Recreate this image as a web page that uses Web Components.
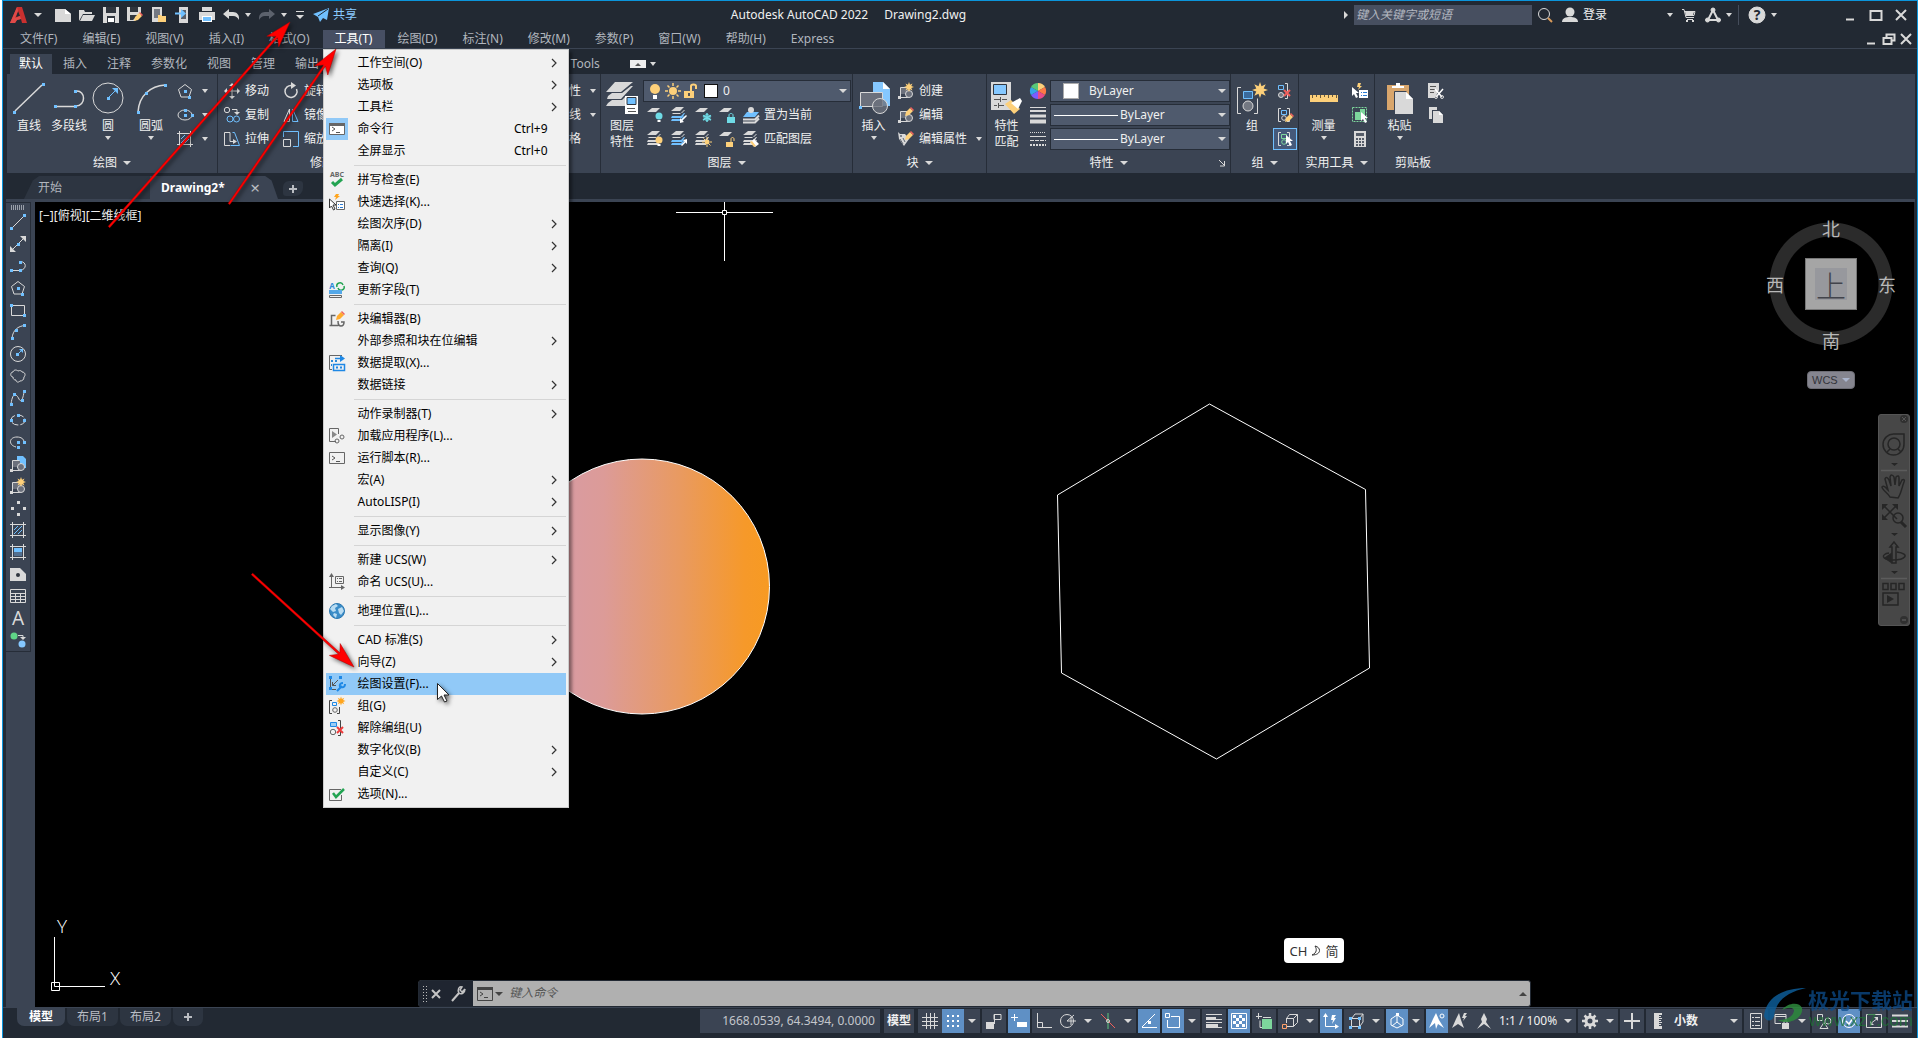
<!DOCTYPE html>
<html lang="zh-CN">
<head>
<meta charset="utf-8">
<title>Autodesk AutoCAD 2022 Drawing2.dwg</title>
<style>
html,body{margin:0;height:100%;background:#fff;overflow:hidden}
body{font:12px/16px "Noto Sans","Noto Sans CJK SC",sans-serif;color:#f0f0f0}
</style>
</head>
<body>
<cad-app>
  <cad-titlebar slot="top"></cad-titlebar>
  <cad-menubar slot="top"></cad-menubar>
  <cad-ribbon-tabs slot="top"></cad-ribbon-tabs>
  <cad-ribbon slot="top"></cad-ribbon>
  <cad-doc-tabs slot="top"></cad-doc-tabs>
  <cad-toolbar slot="left"></cad-toolbar>
  <cad-canvas slot="main"></cad-canvas>
  <cad-footer slot="bottom"></cad-footer>
  <cad-arrows slot="over"></cad-arrows>
</cad-app>

<script>
const L='#d9d9d9', B='#70c0ff', Y='#fdd07a', R='#f0605c', G='#7dd69c', T='#6fdbe6', K='#5f6570';
const sq=(x,y,c=B,s=3)=>`<path d="M${x-1} ${y-1}h${s}v${s}h-${s}z" fill="${c}" stroke="none"/>`;
const f=(d,c=L)=>`<path d="${d}" fill="${c}" stroke="none"/>`;
const p=(d,c=L,w=1)=>`<path d="${d}" stroke="${c}" stroke-width="${w}"/>`;
const ci=(x,y,r,c='none',s=L)=>`<circle cx="${x}" cy="${y}" r="${r}" fill="${c}" stroke="${s}"/>`;
const sheet=(y,c=L,x=0)=>f(`M${x+5} ${y}h8l-4 4h-9z`,c);
const sheets=(c2=L)=>sheet(0)+f('M2 6h9l3-3h-1l-3 3-1 1H1z')+f('M1 9h9l3-3h1l-3 5H0z',c2)+f('M1 12h9l3-3h1l-3 5H0z',c2);
const spark=(x,y,r,c=Y)=>{let d='';for(let i=0;i<16;i++){const a=i*Math.PI/8,q=i%2?r*.5:r;d+=(i?'L':'M')+(x+Math.sin(a)*q).toFixed(1)+' '+(y-Math.cos(a)*q).toFixed(1)}return f(d+'z',c)};
const pencil=(x,y,dark)=>f(`M${x} ${y+8}l1-4 4-4 3 3-4 4z`,dark?'#ffab2e':Y)+f(`M${x+5} ${y}l1-1 3 3-1 1z`,R);
const bulb=(x,y,c)=>ci(x,y,3.5,c,'none')+f(`M${x-1.5} ${y+4}h3v2h-3z`,'#fff');
const blk=(fill='#6b707c',s=L)=>p('M.5 14.5h10M2.5 14V4.5h7',s)+f('M3 5h7v6H3z',fill)+ci(11,11,3.5,fill,s)+sq(1,14,s);
const cur=(x,y)=>`<path d="M${x} ${y}v9l2-2 2 4 2-1-2-4h3z" fill="#fff" stroke="none"/>`;
const brk=(c,b,g)=>p('M4 1.500H1.500v13H4M10 14.500h2.500v-13H10',c)+`<path d="M4.500 3.500h5v4h-5z" fill="none" stroke="${b}"/>`+ci(7,11,2.300,'none',g);
const pent=p('M8 1.500L14.500 6.500 12 14H4L1.500 6.500z')+sq(8,8)+sq(12,14);
const hatchFrame=p('M0 2.500h16M0 13.500h16M2.500 0v16M13.500 0v16');
const I={
logo:[18,f('M7 1h5l5 16h-5l-1-4-4 1-2 3H0z','#c9302f')+f('M8 5l-2 6 4-1z','#222933')+f('M0 17L7 1l1 4-3 7 5-2 1 3-4 1-2 3z','#e04a48')],
new:[16,f('M0 2h10l6 5v8H0z')+f('M10 2v5h6z','#fff')],
open:[16,f('M0 14V3h5l1 2h7v2H4z')+f('M4 8h12l-3 6H1z')],
save:[16,f('M0 0h16v16H0z')+f('M3 0h10v6H3zM4 9h8v7H4z','#30363f')+f('M5 11h6v4H5z','#fff')],
saveas:[16,f('M0 0h14v8l-6 6H0z')+f('M3 0h8v5H3zM3 8h8l-5 5H3z','#30363f')+pencil(7,6)],
webopen:[16,f('M1 0h10v15H1z')+f('M3 2h6v9H3z','#737882')+f('M7 8h3l1 1h4v6H7z',Y)],
websave:[16,f('M4 0h9v16H4z')+f('M6 3h5v9H6z','#59606b')+p('M0 6.500h7',B,2)+f('M6 2l5 4.500L6 11z',B)],
print:[16,f('M3 0h10v4H3zM0 5h16v8H0z')+f('M3 9h10v6H3z','#fff')+f('M4 10h8v4H4z',B)],
undo:[16,f('M0 7l6-5v3h4c4 0 6 3 6 6v2c-1-2-3-4-6-4H6v3z')],
redo:[16,f('M16 7l-6-5v3H6c-4 0-6 3-6 6v2c1-2 3-4 6-4h4v3z','#5c626d')],
custom:[10,p('M1 1.500h8')+f('M1 5h8L5 9z')],
plane:[16,f('M0 7L16 1l-2 12-4-2-3 4-2-5z',B)+p('M15 2L5 9','#222933')],
down:[8,f('M0 2h8L4 6z')],
downs:[6,f('M0 1h6L3 5z')],
right:[8,f('M2 0v8l4-4z')],
search:[16,ci(7,7,5.500)+p('M11 11l4 4','#d99b5b',2)],
user:[16,ci(8,5,4.500,L,'none')+f('M0 15c0-4 4-5 8-5s8 1 8 5z')],
cart:[14,p('M0 1.500h2l2 8h8M3 3.500h10l-1 4H4M5 11.500h6',L)+f('M3 4h9l-1 3H4zM4 12h2v2H4zM10 12h2v2h-2z')],
adsk:[16,p('M3 13L8 3l5 10z',L,2)+ci(8,3,2,L)+ci(2.500,13,2,L)+ci(13.500,13,2,L)],
help:[18,ci(9,9,8,L)+'<text x="9" y="14" text-anchor="middle" font-size="14" font-weight="bold" fill="#222933" stroke="none">?</text>'],
min:[14,p('M3 11.500h8',L,2)],
max:[14,p('M1.500 3h11v9h-11z',L,2)],
close:[12,p('M1 1l10 10M11 1L1 11',L,2)],
restore:[14,p('M4.500 5V2.500h8v6H10',L,2)+p('M1.500 6h8v6h-8z',L,2)],
line32:[32,p('M2 29L29 3',L,1.500)+sq(1,30)+sq(30,2)],
pline32:[32,p('M3 24.500h20M23 9c10-1 10 15 0 15',L,1.500)+sq(2,24)+sq(22,24)+sq(22,9)],
circle32:[32,ci(16,16,15)+p('M16 16l8-8',B)+f('M26 6v6l-6-6z',B)+sq(16,16)],
arc32:[32,p('M3 30C4 13 16 4 30 3',L,1.500)+sq(3,30)+sq(11,11)+sq(30,3)],
pent:[16,pent],
ellipse:[16,'<ellipse cx="8" cy="8" rx="7" ry="5"/>'+sq(8,8)+sq(15,8)+sq(8,3)],
hatch:[16,hatchFrame+p('M4 8l4-4M4 12l8-8M8 12l4-4',B)],
move:[16,p('M8 1v14M1 8h14')+f('M8 0l3 3H5zM8 16l3-3H5zM0 8l3-3v6zM16 8l-3-3v6z')],
rotate:[16,p('M9 2.500A6 6 0 1 0 13.500 6',L,1.500)+f('M8-1l5 3.500L8 6z')],
copy:[16,ci(3,3,2.700)+p('M8 2.500h5v4')+f('M10 5h6l-3 3z')+ci(6,12,3,'none',B)+ci(12.500,12,3,'none',B)],
mirror:[16,p('M6.500 2v12.500H1z')+p('M9.500 2v12.500H15z',B)],
stretch:[16,p('M6 14.500H.500V1.500H6v9M6 10.500h4')+f('M9 8l4 2.500L9 13z')+p('M8.500 1.500h2l5 13h-9',B)],
scale:[16,p('M.500 8.500h7v7h-7z')+p('M.500 6V.500h15v15H10',B)],
layers32:[32,f('M9 0h18L15 10H0zM2 14l4-3h10l9-7h2L15 17H1zM2 21l4-3h10l3-3 1 9H0z')+f('M19 14h13v18H19z','#fff')+`<path d="M21 15.500h9v7h-9z" fill="${B}" stroke="#30363f"/>`+p('M21 26.500h8M22 29.500h8','#555')],
bulbY:[16,ci(8,6,5,Y,'none')+f('M6 12h4v4H6z','#fff')],
sun:[16,ci(8,8,4,Y,'none')+p('M8 0v3M8 13v3M0 8h3M13 8h3M2.500 2.500l2 2M11.500 11.500l2 2M2.500 13.500l2-2M11.500 4.500l2-2',Y,1.500)],
lock:[16,f('M1 8h10v7H1z',Y)+p('M8 8V3c0-2 5-2 5 0v3',Y,2)+f('M5 10h2v3H5z','#555')],
ly1:[16,sheet(1)+bulb(12,9,T)],
ly2:[16,sheets(B)+f('M9 16v-5l1.500 1.500L15 8l1 1-4.500 4.500L13 15z','#fff')],
ly3:[16,sheet(1)+p('M12 6v9M8 8.500l8 4.500M16 8.500L8 13',T,1.500)+ci(12,10.500,3,'none',T)],
ly4:[16,sheet(1)+f('M8 10h8v6H8z',T)+p('M10 10V8c0-2 4-2 4 0v2',T)],
ly5:[16,f('M4 5h12l-4 5H0z',B)+p('M0 12.500h12l4-4M0 15.500h12l4-4',L,2)+ci(8,3,3,L,'none')],
ly6:[16,sheets()+bulb(12,9,Y)],
ly7:[16,sheets(B)+f('M16 8v5l-1.500-1.500L11 15l-1-1 3.500-3.500L12 9z','#fff')],
ly8:[16,sheets()+ci(12,11,2.500,Y,'none')+p('M12 6v2M12 14v2M7 11h2M15 11h2M8.500 7.500l1.500 1.500M15.500 14.500L14 13',Y)],
ly9:[16,sheet(1)+f('M7 11h7v5H7z',Y)+p('M12 11V8c0-2 3-2 3 0v2',Y)],
ly10:[16,sheets()+f('M7 12l4-4 5 5-4 3z','#fff')+f('M7 11l2-1 4 5-2 1z',Y)],
insert32:[32,f('M15 0h10l7 7v17H15z','#85c8ff')+f('M25 0v7h7z','#fff')+`<path d="M2.500 10.500h22v14h-22z" fill="#6b707c" stroke="${L}"/>`+ci(22,24,7.500,'#6b707ccc')+sq(2,25)],
create:[16,blk()+spark(11,4,5)],
edit:[16,blk()+pencil(7,1)],
attr:[16,f('M0 1l2 2h5l4 5-5 7-5-7z')+ci(3,5,1,K,'none')+p('M2 8l3 5M5 7l2 4',K)+pencil(7,1)],
props32:[32,f('M0 0h20v28H0z')+`<path d="M2.500 2.500h13v10h-13z" fill="#85c8ff" stroke="#30363f"/>`+p('M3 17.500h6M11 17.500h5M3 23.500h3M8 23.500h5M9.500 15v5M7.500 21v5','#555')+f('M14 22l6-4 9 9-6 5z',Y)+f('M20 21l9-5 2 3-4 8z','#fff')],
wheel:[16,f('M8 8V0a8 8 0 0 1 7 4z',Y)+f('M8 8l7-4a8 8 0 0 1 0 8z','#ff7a45')+f('M8 8l7 4a8 8 0 0 1-7 4z','#e84b8a')+f('M8 8v8a8 8 0 0 1-7-4z','#7a5cff')+f('M8 8l-7 4a8 8 0 0 1 0-8z','#35a5e8')+f('M8 8L1 4a8 8 0 0 1 7-4z','#58c878')],
lws:[16,p('M0 .500h16')+p('M0 4h16',L,2)+p('M0 9h16',L,3)+p('M0 14.500h16',L,4)],
lts:[16,'<g stroke-dasharray="1 1">'+p('M0 1.500h16')+'</g>'+p('M0 5.500h16')+'<g stroke-dasharray="4 1">'+p('M0 9.500h16')+'</g><g stroke-dasharray="2 1">'+p('M0 13.500h16M0 14.500h16')+'</g>'],
group32:[32,p('M5 5.500H1.500v26H5M18 31.500h3.500v-15',L)+`<path d="M7.500 9.500h9v7h-9z" fill="#3a6a9c" stroke="${B}"/>`+ci(12,24,5,'#737882')+spark(24,8,8)],
ungroup:[16,`<path d="M1.500 2.500h5v4h-5z" stroke="${B}"/>`+ci(4,12,2.500,'#737882')+p('M8 .500h2.500v15H8')+p('M7 7l6 6M13 7l-6 6',R,2)],
gedit:[16,brk(L,B,L)+pencil(8,7)],
gsel:[16,brk(L,G,G)+cur(9,4)],
ruler32:[32,f('M2 13h28v7H2z',Y)+p('M4.500 13v3M8.500 13v2M12.500 13v3M16.500 13v2M20.500 13v3M24.500 13v2M28.500 13v3','#6a5a3a')],
qsel:[16,cur(0,4)+f('M7 7h9v8H7z','#fff')+p('M9 9.500h1M11 9.500h4M9 12.500h1M11 12.500h4','#2b7cd3')+f('M6 0h3L8 3h2L6 7l1-3H5z',Y)],
selall:[16,`<path d="M.500 .500h14v14h-14z" stroke="${G}" stroke-dasharray="2 1"/>`+f('M3 5h5V2h5v7H9v4H3z',G)+cur(9,5)],
calc:[16,f('M2 0h12v16H2z')+f('M4 2h8v3H4zM4 7h2v2H4zM7 7h2v2H7zM10 7h2v2h-2zM4 10h2v2H4zM7 10h2v2H7zM10 10h2v2h-2zM4 13h2v2H4zM7 13h2v2H7zM10 13h2v2h-2z','#555c68')],
paste32:[32,f('M3 3h22v25H3z','#d9a66c')+f('M8 4h4V1h4v3h4v2H8z','#fff')+f('M11 10h11l7 7v15H11z')+f('M22 10v7h7z','#fff')+p('M10.500 32V9.500h12','#3b4453')],
cut:[16,f('M0 0h11v7l-4 8H0z')+p('M2 3.500h6M2 6.500h5M2 9.500h4','#555')+p('M7 6l7 8M15 6l-7 8','#fff',1.500)+ci(8,14,1.500)+ci(14,14,1.500)],
copyc:[16,f('M1 0h8v3H4v9H1z')+f('M5 4h6l4 4v8H5z')+f('M11 4v4h4z','#fff')],
launcher:[8,p('M1 1l5 5M6.500 2v5H2')],
plus:[10,p('M5 1v8M1 5h8','#b9bcc1',2)],
tline:[16,p('M1 15L15 1')+sq(1,14)+sq(14,1)],
txline:[16,p('M2 14L14 2')+f('M0 16v-6l6 6zM16 0v6l-6-6z')+sq(8,8)],
tpline:[16,p('M1 12.500h9M10 3.500c7 0 7 8 0 9')+sq(1,12)+sq(10,12)+sq(10,4)],
trect:[16,p('M1.500 3.500h13v10h-13z')+sq(1,3)+sq(14,13)],
tarc:[16,p('M2 14C3 6 8 2 15 1.500')+sq(2,14)+sq(6,6)+sq(14,1)],
tcircle:[16,ci(8,8,7.500)+p('M8 8l4-4',B)+f('M13 3v4L9 3z',B)+sq(7,8)],
cloud:[16,p('M3 9c-3 0-3-5 0-5 1-3 4-2 5-1 2-1 4 0 4 1 3 0 4 3 2 5 0 3-2 4-4 4-2 2-4 1-4-1-2 0-3-1-3-3z')],
spline:[16,p('M1 14C3 0 7 5 9 9s4 0 5-7')+sq(1,14)+sq(4,4)+sq(12,10)+sq(14,1)],
tell:[16,'<ellipse cx="8" cy="8" rx="7" ry="5" stroke-dasharray="7 2"/>'+sq(1,8)+sq(14,8)+sq(8,3)],
tearc:[16,p('M6 13C-2 11-1 3 7 3c4 0 7 2 7 5')+sq(8,8)+sq(14,8)+sq(8,13)],
tins:[16,f('M7 0h6l3 3v9H7z',B)+blk()],
points:[16,sq(8,2,L)+sq(2,8,L)+sq(14,8,L)+sq(8,14,L)],
grad:[16,hatchFrame+f('M4 4h8v4H4z',B)+f('M4 8h8v4H4z','#547090')],
region:[16,f('M0 2h10l6 6v7H0z')+ci(8,9,2,'#30363f','none')],
table:[16,p('M.500 1.500h15v13H.500zM0 5.500h16M0 8.500h16M0 11.500h16M5.500 5v10M10.500 5v10')],
mtext:[16,'<text x="8" y="15" text-anchor="middle" font-size="19" font-family="Noto Sans" fill="#d9d9d9" stroke="none">A</text>'],
addsel:[16,ci(4,4,3.500,'#5fd587','none')+ci(12,12,3.500,'#85c8ff','none')+p('M8 3.500h5v3')+f('M10 5h6l-3 3z')],
/* drop-down menu icons */
mcmd:[16,`<path d="M.500 2.500h15v11H.500z" fill="#fff" stroke="#666"/>`+f('M0 2h16v3H0z','#666')+p('M3 6l3 2-3 2M7 11.500h4','#555')],
mspell:[16,'<text x="8" y="5" text-anchor="middle" font-size="7" font-weight="bold" fill="#666" stroke="none">ABC</text>'+p('M3 10l3 3 7-6','#23a452',3)],
mqsel:[16,'<path d="M.500 5v9l2-2 2 4 1.500-1-2-4h3z" fill="#fff" stroke="#333"/>'+'<path d="M7.500 7.500h8v8h-8z" fill="#fff" stroke="#666"/>'+p('M9 10.500h1M11 10.500h3M9 13.500h1M11 13.500h3','#2b7cd3')+f('M7 0h3L9 2h2L6 6l1-3H5z','#ffa51e')],
mfield:[16,'<text x="3" y="7" text-anchor="middle" font-size="8" font-weight="bold" fill="#2b8ad8" stroke="none">A</text>'+p('M8 5a3 3 0 0 1 6-2M15 4a3 3 0 0 1-6 2','#23a452',1.500)+f('M0 8h13v4H0z','#55a8e8')+p('M.500 13.500h12v2H.500z','#666')],
mblk:[16,p('M.500 14.500h9M2.500 14V4.500h4M9 10c0 7 6 6 6 1l-3 0','#666',1.500)+pencil(7,1,1)],
mdata:[16,p('M13 .500H.500v14H3','#666')+p('M2 6h2M6 6h2M2 10h1','#2b8ad8',2)+p('M6 3.500h8M4.500 9.500h11v6h-11z','#1e88e5',1.500)+p('M7 12.500h2M11 12.500h2','#1e88e5',2)+f('M11 0l5 3.500L11 7z','#1e88e5')],
mapp:[16,p('M7 13.500H.500v-13h9V6','#666')+f('M3 3l5 3.500L3 10z','#888')+ci(8,13,2,'none','#666')+ci(13,9,2,'none','#666')],
mscr:[16,p('M.500 2.500h15v11H.500z','#666')+p('M3 6l3 2-3 2M7 11.500h4','#555')],
mucs:[16,p('M2.500 2v11.500H14M0 13.500h3M6.500 2.500h8v7h-8zM8 4.500h1M10 4.500h3M8 7.500h1M10 7.500h3','#666')+f('M2.500-1l2.500 4H0zM16 13.500l-4-2.500v5z','#666')],
globe:[16,ci(8,8,7.500,'#3a8cc8','#2b78b0')+f('M3 3l4-2 2 2-3 2 1 3-3 1-3-3zM9 6l4-2 2 4-3 4-2-2zM5 10l3 1-1 4-3-3z','#b9dcf2')],
mdraft:[16,p('M1.500 3v9M3.500 9.500L9 4M3.500 6v3.500H7M3 13.500h4','#555')+sq(1,1,'#1e88e5')+sq(11,1,'#1e88e5')+sq(1,12,'#1e88e5')+p('M8 15l5-5M11 11c-1-3 1-4 3-4M12 11c3 1 4-1 4-3','#1e88e5',2)],
mgroup:[16,p('M3 2.500H.500v13H3M8 15.500h2.500V9','#444',1)+p('M3.500 4.500h4v3h-4z','#1e88e5')+ci(6,12,2.300,'none','#666')+spark(12,3,4.500,'#ffa51e')],
mungroup:[16,'<path d="M1.500 2.500h6v4h-6z" fill="#9ccdf5" stroke="#1e88e5"/>'+ci(4,12,2.700,'none','#666')+p('M9 .500h2.500v15H9','#444')+p('M8 7l6 6M14 7l-6 6','#ee3b3b',2)],
moptions:[16,p('M12 3.500H.500v11h12V9','#666')+p('M4 7l3 4 8-8','#23a452',2.500)],
chev:[8,p('M2 0l4 4-4 4','#333',1.200)],
/* status bar icons */
sgrid:[16,p('M0 4.500h16M0 8.500h16M0 12.500h16M4.500 0v16M8.500 0v16M12.500 0v16')],
ssnap:[16,[1,6,11].map(a=>[2,7,12].map(b=>f(`M${a+1} ${b}h2v2h-2z`,'#fff')).join('')).join('')],
sinf:[16,p('M8 1.500h7v5H8z')+f('M0 9h8v7H0z')+p('M8.500 2v9')],
sdyn:[16,p('M3.500 1v7M0 4.500h7','#fff')+f('M6 9h10v5H6z','#fff')],
sortho:[16,p('M1.500 0v14.500H16M1.500 9.500h5v5')],
spolar:[16,ci(7,8,6.500)+p('M7 8l7-6M7 8h9M11 12V4')],
siso:[16,p('M1 1l14 14',R)+p('M8 0v16','#5fc87f')+ci(8,8,1.500)],
strack:[16,p('M1 14.500h15M1 14L14 1','#fff')+sq(8,9,'#fff')],
sosnap:[16,p('M6 3.500h8.500v11h-12V7','#fff')+p('M.500 .500h4v4h-4z','#fff')],
slw:[16,p('M0 1.500h16')+f('M0 4h10v3H0zM0 11h12v4H0z')+p('M0 9.500h16M8 6.500h8M9 14.500h7')],
strans:[16,p('M.500 .500h15v15H.500z','#fff')+[2,5,8,11].map((a,i)=>[2,5,8,11].map((b,j)=>(i+j)%2?'':f(`M${a} ${b}h3v3h-3z`,'#fff')).join('')).join('')],
scyc:[16,p('M2.500 0v6M0 3.500h6M4 7.500v7h3M7 4.500h8')+f('M6 6h10v10H6z',G)],
s3d:[16,p('M4.500 5.500h7v8H5M4.500 5.500l3-4h8v8l-4 4M11.500 5.500l4-4M4.500 5v5')+p('M.500 11.500h4v4h-4z','#ffa06a')],
sducs:[16,p('M2.500 2v11.500H15','#fff')+f('M2.500 0l2.500 4H0zM16 13.500l-4-2.500v5zM9 2h4l-2 3h2l-4 6 1-4H8z','#fff')],
sfilt:[16,p('M3.500 5.500h8v8h-8zM4 5l3-4h8v8l-3 4M12 5l3-4')+sq(2,5)+sq(11,5)+sq(2,14)+sq(11,14)],
sgiz:[16,p('M8 2L2 6v6l6 3 6-3V6zM8 2v7L3 13M8 9l5 4','#fff')+sq(8,1,'#fff')],
sann1:[16,f('M7 0L4 6 0 15l6-5 1 6 2-5 6 4-5-8z','#fff')+ci(13,3,2,'none','#fff')],
sann2:[16,f('M7 0L4 6 0 15l6-4 6 4-3-8z')+f('M12 0h3l-2 3h2l-4 5 1-3h-2z')],
sann3:[16,f('M8 0L5 6l1 3-5 7 7-5 7 5-5-7 1-3z')],
gear:[16,ci(8,8,4,'none',L).replace('/>',' stroke-width="3"/>')+p('M8 0v4M8 12v4M0 8h4M12 8h4M2.500 2.500l3 3M10.500 10.500l3 3M2.500 13.500l3-3M10.500 5.500l3-3',L,2.500)],
splus:[16,p('M8 0v16M0 8h16',L,2)],
sruler:[16,f('M4 0h8v2H9v1h2v1H9v1h3v1H9v1h2v1H9v1h3v1H9v1h2v1H9v1h3v3H4z')],
slist:[16,p('M2.500 .500h11v15h-11zM4 4.500h2M7 4.500h5M4 8.500h2M7 8.500h5M4 12.500h2M7 12.500h5')],
slock:[16,p('M12 7V1.500H1v9h6M1 3.500h11')+f('M8 10h7v6H8z')+p('M10 10V8h3v2')],
siso2:[16,p('M1.500 1.500h5v6h-5zM8 9.500l4 6H4z')+ci(12,8,3)],
sclean:[16,ci(8,8,6.500,'none','#fff')+p('M5 8l3 3 4-6','#fff',1.500)],
sfull:[16,p('M.500 1.500h15v13H.500zM4 11l8-6')+f('M12 4v4L8 4zM4 12V8l4 4z')],
sburger:[16,p('M0 2.500h16M0 8h16M0 13.500h16',L,2)],
wrench:[16,p('M2 15l7-8','#c4c4c4',2)+p('M15 3l-3 3-2-2 2-3C9 0 7 4 9 7c2 2 6 0 6-4','#c4c4c4',1.500)],
cmdx:[12,p('M2 2l8 8M10 2l-8 8','#c4c4c4',2)],
cmdbox:[16,`<path d="M.500 1.500h15v13H.500z" stroke="#444"/>`+f('M0 1h16v3H0z','#444')+p('M3 6l3 2-3 2M7 11.500h4','#444')]
};
class Icon extends HTMLElement{
  connectedCallback(){
    const [n,m]=I[this.getAttribute('name')];
    if(!this.shadowRoot)this.attachShadow({mode:'open'});
    this.shadowRoot.innerHTML=`<style>:host{display:inline-block;flex:none;width:${n}px;height:${n}px}svg{display:block;overflow:visible}</style><svg width="${n}" height="${n}" viewBox="0 0 ${n} ${n}" fill="none" stroke="${L}" aria-hidden="true">${m}</svg>`;
  }
}
customElements.define('cad-icon',Icon);
const ic=n=>`<cad-icon name="${n}"></cad-icon>`;
const BASE=':host,*{box-sizing:border-box}button,input,select{font:inherit;color:inherit;background:none;border:0;padding:0;margin:0;border-radius:0;outline:0}button{display:flex;align-items:center;white-space:nowrap}';
const define=(tag,css,html)=>customElements.define(tag,class extends HTMLElement{
  constructor(){super();const r=this.attachShadow({mode:'open'});
  r.innerHTML=`<style>${BASE}${css}</style>`+(typeof html==='function'?html(this):html);}
});

define('cad-app',`
:host{display:flex;flex-direction:column;height:100vh;margin:0 1px 0 2px;border:1px solid #0b95dc;border-bottom:0;background:#222933;position:relative}
.mid{flex:1;display:flex;min-height:0;padding:0 3px}
::slotted([slot=main]){flex:1}`,
`<slot name="top"></slot><div class="mid"><slot name="left"></slot><slot name="main"></slot></div><slot name="bottom"></slot><slot name="over"></slot>`);

define('cad-titlebar',`
:host{display:grid;grid-template-columns:38% 1fr auto;align-items:center;height:29px;padding:0 10px 2px 7px}
.l,.r{display:flex;align-items:center}.l{gap:8px}.r{justify-content:flex-end}
.pair{gap:6px}.logo{margin-right:5px;gap:6px}
.share{color:#8bcbff;gap:4px}
.t{display:flex;gap:16px}
input{width:178px;height:20px;background:#474f60;padding:0 2px;font-style:italic;color:#ddd;margin-left:4px}
input::placeholder{color:#b4b8c0;opacity:1}
.r button{margin-left:5px}.r .u{gap:5px;margin-left:9px}.r .m{margin-left:60px}
.sep{width:1px;height:20px;background:#454d5b;margin-left:6px}
.r .w{margin-left:12px}.r .w1{margin-left:66px}`,
`<div class="l"><button class="logo" aria-label="应用程序">${ic('logo')}${ic('down')}</button>
${['new','open','save','saveas','webopen','websave','print'].map(n=>`<button aria-label="${n}">${ic(n)}</button>`).join('')}
<button class="pair" aria-label="undo">${ic('undo')}${ic('downs')}</button><button class="pair" aria-label="redo">${ic('redo')}${ic('downs')}</button>
<button aria-label="custom">${ic('custom')}</button><button class="share">${ic('plane')}<span>共享</span></button></div>
<div class="t"><span>Autodesk AutoCAD 2022</span><span>Drawing2.dwg</span></div>
<div class="r">${ic('right')}<input placeholder="键入关键字或短语" aria-label="搜索"><button aria-label="搜索">${ic('search')}</button>
<button class="u">${ic('user')}<span>登录</span></button><button class="m" aria-label="登录菜单">${ic('downs')}</button>
<button class="u" aria-label="商店">${ic('cart')}</button><button class="u" aria-label="Autodesk">${ic('adsk')}${ic('downs')}</button><span class="sep"></span>
<button class="u" aria-label="帮助">${ic('help')}${ic('downs')}</button>
<button class="w1" aria-label="最小化">${ic('min')}</button><button class="w" aria-label="最大化">${ic('max')}</button><button class="w" aria-label="关闭">${ic('close')}</button></div>`);

define('cad-menu-item',`
:host{display:block}
button{width:100%;height:22px;color:#000;text-align:left}
.i{width:22px;height:22px;display:flex;align-items:center;justify-content:center;margin-right:10px}
.l{flex:1}.k{padding-right:18px}.c{width:16px;display:flex;align-items:center}
:host([checked]) .i{background:#91c9f7}
:host([active]) button{background:#91c9f7}`,
h=>`<button role="menuitem"><span class="i">${h.getAttribute('icon')?ic(h.getAttribute('icon')):''}</span><span class="l"><slot></slot></span>${h.getAttribute('key')?`<span class="k">${h.getAttribute('key')}</span>`:''}${h.hasAttribute('sub')?`<span class="c">${ic('chev')}</span>`:''}</button>`);

/* label, icon, shortcut or '>' for a submenu, state */
const MENU=[['工作空间(O)','','>'],['选项板','','>'],['工具栏','','>'],['命令行','mcmd','Ctrl+9','checked'],['全屏显示','','Ctrl+0'],0,
['拼写检查(E)','mspell'],['快速选择(K)...','mqsel'],['绘图次序(D)','','>'],['隔离(I)','','>'],['查询(Q)','','>'],['更新字段(T)','mfield'],0,
['块编辑器(B)','mblk'],['外部参照和块在位编辑','','>'],['数据提取(X)...','mdata'],['数据链接','','>'],0,
['动作录制器(T)','','>'],['加载应用程序(L)...','mapp'],['运行脚本(R)...','mscr'],['宏(A)','','>'],['AutoLISP(I)','','>'],0,
['显示图像(Y)','','>'],0,['新建 UCS(W)','','>'],['命名 UCS(U)...','mucs'],0,['地理位置(L)...','globe'],0,
['CAD 标准(S)','','>'],['向导(Z)','','>'],['绘图设置(F)...','mdraft','','active'],['组(G)','mgroup'],['解除编组(U)','mungroup'],['数字化仪(B)','','>'],['自定义(C)','','>'],['选项(N)...','moptions']];
define('cad-dropdown',`
:host{display:block;width:246px;background:#f1f1f1;border:1px solid #ccc;padding:2px;box-shadow:3px 3px 3px #0006}
hr{border:0;height:1px;background:#d5d5d5;margin:3px 0 3px 28px}`,
`<div role="menu">${MENU.map(m=>m?`<cad-menu-item ${m[1]?`icon="${m[1]}"`:''} ${m[2]==='>'?'sub':m[2]?`key="${m[2]}"`:''} ${m[3]||''}>${m[0]}</cad-menu-item>`:'<hr>').join('')}</div>`);

define('cad-menubar',`
:host{display:flex;height:19px;border-bottom:1px solid #3b4453;padding:0 5px;color:#b1b6be;justify-content:space-between}
nav,.w{display:flex}.w{gap:4px;align-items:center}
nav>div{position:relative;display:flex}
nav button{padding:0 13px 0 12px}
.on{background:#474f63;color:#fff}
cad-dropdown{position:absolute;left:0;top:19px;z-index:20}`,
`<nav>${['文件(F)','编辑(E)','视图(V)','插入(I)','格式(O)'].map(t=>`<button>${t}</button>`).join('')}<div><button class="on">工具(T)</button><cad-dropdown></cad-dropdown></div>${['绘图(D)','标注(N)','修改(M)','参数(P)','窗口(W)','帮助(H)','Express'].map(t=>`<button>${t}</button>`).join('')}</nav>
<div class="w"><button aria-label="最小化图形">${ic('min')}</button><button aria-label="还原图形">${ic('restore')}</button><button aria-label="关闭图形">${ic('close')}</button></div>`);

define('cad-ribbon-tabs',`
:host{display:flex;height:25px;padding:5px 0 0 6px;color:#b1b6be}
button{padding:0 10px;height:20px}
.on{background:#3b4453;color:#fff;padding:0 9px;margin:0 1px}
.more{width:185px}
.x{gap:4px;padding:0 0 0 20px}.x i{width:16px;height:8px;background:#eee;display:flex;align-items:center;justify-content:center}
.x i::before{content:"";border:3px solid transparent;border-top:0;border-bottom:3px solid #555}`,
`<button class="on">默认</button>${['插入','注释','参数化','视图','管理','输出'].map(t=>`<button>${t}</button>`).join('')}<span class="more"></span><button>Express Tools</button><button class="x" aria-label="最小化功能区"><i></i>${ic('downs')}</button>`);

define('cad-panel',`
:host{display:flex;flex-direction:column;width:var(--w);height:99px;padding-top:5px;border-right:1px solid #262d38;flex:none}
:host([last]){border:0}
.b{flex:1;display:flex}
.t{height:20px;display:flex;justify-content:center;align-items:center;gap:6px;position:relative}
.t>cad-icon[name=launcher]{position:absolute;right:4px}`,
h=>`<div class="b"><slot></slot></div><div class="t"><span>${h.getAttribute('label')}</span>${h.hasAttribute('last')?'':ic('down')}${h.hasAttribute('launch')?ic('launcher'):''}</div>`);

define('cad-big',`
:host{display:block;flex:none;width:var(--w,40px)}
button{width:100%;flex-direction:column;padding-top:3px}
span{margin-top:4px;text-align:center}cad-icon[name=downs]{margin-top:1px}`,
h=>`<button>${ic(h.getAttribute('icon'))}<span><slot></slot></span>${h.hasAttribute('menu')?ic('downs'):''}</button>`);

define('cad-small',`
:host{display:block;height:24px}
button{height:24px;gap:5px;padding:0 4px;min-width:24px;justify-content:center}
cad-icon[name=downs]{margin-left:4px}
:host([on]) button{border:1px solid #70c0ff;background:#45597a;padding:0 3px;height:22px;margin-top:1px}`,
h=>`<button aria-label="${h.textContent||h.getAttribute('icon')||''}">${h.getAttribute('icon')?ic(h.getAttribute('icon')):''}<slot></slot>${h.hasAttribute('menu')?ic('downs'):''}</button>`);

define('cad-combo',`
:host{display:flex;align-items:center;height:22px;margin:1px 0;width:var(--cw,180px);background:#4f5a6d;border:1px solid #262d38;padding:0 3px}
select{appearance:none;flex:1;height:20px;min-width:0}
option{color:#000}`,
h=>`<slot></slot><select aria-label="${h.getAttribute('label')}"><option>${h.getAttribute('value')}</option></select>${ic('down')}`);

const sm=(i,t='',a='')=>`<cad-small ${i?`icon="${i}"`:''} ${a}>${t}</cad-small>`;
define('cad-ribbon',`
:host{display:flex;background:#3b4453;margin:0 2px 0 4px;height:99px}
.c{display:flex;flex-direction:column;align-items:flex-start}
.row{display:flex;height:24px}
.sw{width:14px;height:14px;background:#fff;border:1px solid #111;margin:0 5px}
.sw2{width:16px;height:16px;background:#fff;border:1px solid #aaa;margin:0 10px 0 9px}
.ln{width:64px;height:1px;background:#fff;margin-right:2px}
.ics{gap:2px;display:flex}
.end{margin-left:auto}`,
`<cad-panel label="绘图" style="--w:211px"><cad-big icon="line32" style="--w:44px">直线</cad-big><cad-big icon="pline32" style="--w:36px">多段线</cad-big><cad-big icon="circle32" menu style="--w:42px">圆</cad-big><cad-big icon="arc32" menu style="--w:44px">圆弧</cad-big><div class="c">${sm('pent','','menu')}${sm('ellipse','','menu')}${sm('hatch','','menu')}</div></cad-panel>
<cad-panel label="修改" style="--w:223px"><div class="c" style="padding-left:2px">${sm('move','移动')}${sm('copy','复制')}${sm('stretch','拉伸')}</div><div class="c" style="padding-left:6px">${sm('rotate','旋转')}${sm('mirror','镜像')}${sm('scale','缩放')}</div></cad-panel>
<cad-panel label="" last style="--w:160px;border-right:1px solid #262d38"><div class="c end">${sm('','线性','menu')}${sm('','引线','menu')}${sm('','表格')}</div></cad-panel>
<cad-panel label="图层" style="--w:252px"><cad-big icon="layers32" style="--w:42px">图层<br>特性</cad-big><div class="c"><cad-combo label="图层" value="0" style="--cw:208px"><span class="ics">${ic('bulbY')}${ic('sun')}${ic('lock')}</span><span class="sw"></span></cad-combo>
<div class="row">${sm('ly1')}${sm('ly2')}${sm('ly3')}${sm('ly4')}${sm('ly5','置为当前')}</div><div class="row">${sm('ly6')}${sm('ly7')}${sm('ly8')}${sm('ly9')}${sm('ly10','匹配图层')}</div></div></cad-panel>
<cad-panel label="块" style="--w:134px"><cad-big icon="insert32" menu style="--w:41px">插入</cad-big><div class="c">${sm('create','创建')}${sm('edit','编辑')}${sm('attr','编辑属性','menu')}</div></cad-panel>
<cad-panel label="特性" launch style="--w:244px"><cad-big icon="props32" style="--w:39px">特性<br>匹配</cad-big><div class="c">${sm('wheel')}${sm('lws')}${sm('lts')}</div><div class="c"><cad-combo label="颜色" value="ByLayer"><span class="sw2"></span></cad-combo><cad-combo label="线宽" value="ByLayer"><span class="ln"></span></cad-combo><cad-combo label="线型" value="ByLayer"><span class="ln"></span></cad-combo></div></cad-panel>
<cad-panel label="组" style="--w:68px"><cad-big icon="group32" style="--w:42px">组</cad-big><div class="c">${sm('ungroup')}${sm('gedit')}${sm('gsel','','on')}</div></cad-panel>
<cad-panel label="实用工具" style="--w:76px"><cad-big icon="ruler32" menu style="--w:49px">测量</cad-big><div class="c">${sm('qsel')}${sm('selall')}${sm('calc')}</div></cad-panel>
<cad-panel label="剪贴板" last style="--w:76px"><cad-big icon="paste32" menu style="--w:49px">粘贴</cad-big><div class="c">${sm('cut')}${sm('copyc')}</div></cad-panel>`);

define('cad-doc-tabs',`
:host{display:flex;align-items:flex-end;height:29px;padding:0 0 0 18px;margin:0 2px 0 3px;border-bottom:3px solid #3b4453}
button{height:23px}
.a{width:126px;background:#2d3541;color:#b1b6be;padding-left:14px;clip-path:polygon(0 100%,7% 20%,12% 0,100% 0,100% 100%)}
.b{width:128px;background:#3b4453;color:#fff;font-weight:bold;padding:0 18px 0 11px;justify-content:space-between;clip-path:polygon(0 0,90% 0,95% 20%,100% 100%,0 100%)}
.p{background:#2d3541;width:20px;height:15px;justify-content:center;border-radius:6px 3px 8px 3px;margin:0 0 3px 5px}
.x{font-weight:normal;font-size:17px;color:#b9bcc1}`,
`<button class="a">开始</button><button class="b"><span>Drawing2*</span><span class="x">×</span></button><button class="p" aria-label="新建">${ic('plus')}</button>`);

define('cad-toolbar',`
:host{display:block;width:29px;background:#3b4453;flex:none}
div{width:25px;border:1px solid #262d38;border-left:0;padding:1px 0 0}
i{display:block;width:14px;height:5px;margin:1px auto;background:repeating-linear-gradient(90deg,#9aa0aa 0 1px,transparent 1px 2px)}
button{width:24px;height:22px;justify-content:center}`,
`<div><i></i>${['tline','txline','tpline','pent','trect','tarc','tcircle','cloud','spline','tell','tearc','tins','create','points','hatch','grad','region','table','mtext','addsel'].map(n=>`<button aria-label="${n}">${ic(n)}</button>`).join('')}</div>`);

define('cad-viewcube',`
:host{display:grid;grid-template:20px 92px 20px/20px 92px 20px;place-items:center;font:18px/18px "Noto Sans CJK SC",sans-serif;color:#b8b8b8;background:radial-gradient(circle,transparent 47px,#2b2b2b 48px 61px,transparent 62px)}
.u{width:52px;height:52px;background:#a5a5a5;border:1px solid #777;display:flex;align-items:center;justify-content:center}
.u b{width:32px;height:32px;background:#97989d;font:30px/32px "Noto Sans CJK SC",sans-serif;color:#42444c;text-align:center;font-weight:300}
.n{grid-area:1/2}.w{grid-area:2/1}.u{grid-area:2/2}.e{grid-area:2/3}.s{grid-area:3/2}`,
`<span class="n">北</span><span class="w">西</span><span class="u"><b>上</b></span><span class="e">东</span><span class="s">南</span>`);

define('cad-navbar',`
:host{display:block;width:32px;height:212px;background:#474747;border:1px solid #555;border-radius:3px}
svg{display:block}`,
`<svg width="30" height="210" fill="none" stroke="#262626" stroke-width="1.5" aria-hidden="true">
<circle cx="25" cy="4" r="4" fill="#303030" stroke="none"/><path d="M23 2l4 4M27 2l-4 4" stroke="#555" stroke-width="1"/>
<path d="M15 19h10v10a10.500 10.500 0 1 1-10-10z"/><circle cx="15" cy="29" r="6"/><path d="M8 37l3-3M22 37l-3-3"/>
<path d="M12 48h7l-3.500 3zM12 118h7l-3.500 3zM12 156h7l-3.500 3z" fill="#262626" stroke="none"/>
<path d="M2 55.500h26M2 163.500h26" stroke="#5c5c5c"/>
<path d="M11 82c-2-4-8-7-8-10 2-2 4 1 6 3L6 64c1-3 3-1 4 1l2 6-1-9c1-3 3-2 4 0l1 8 1-8c2-2 3-1 3 1l0 8 3-6c2-1 3 0 2 2-2 5-3 12-6 16z"/>
<path d="M4 90l14 14M18 90L4 104"/><path d="M3 89h6l-6 6zM19 89v6l-6-6zM3 105v-6l6 6z" fill="#262626" stroke="none"/><circle cx="19" cy="103" r="5"/><path d="M22 107l5 5" stroke-width="3"/>
<path d="M15 127l4 5h-2v16h-4v-16h-2z"/><path d="M10 138c-8 1-8 7 4 7s18-6 4-8"/><path d="M6 143l6-4v8z" fill="#262626"/>
<path d="M4 168.500h5v6H4zM12 168.500h5v6h-5zM20 168.500h5v6h-5zM4 178h15v12H4z"/><path d="M8 180l7 4-7 4z" fill="#262626" stroke="none"/>
<circle cx="25" cy="205" r="4" fill="#303030" stroke="none"/><path d="M23 205h4" stroke="#555"/></svg>`);

define('cad-command',`
:host{display:flex;height:27px;background:#b0b0b0;border:1px solid #222933;border-radius:3px;align-items:center;color:#444}
.h{display:flex;align-items:center;gap:2px;width:54px;height:100%;background:#1f2530;padding-left:3px;flex:none}
.h button+button{margin-left:6px}
.g{width:6px;height:18px;background:radial-gradient(circle,#bbb 1px,transparent 1px) 0 0/3px 3px}
.c{gap:2px;margin:0 6px 0 4px}
input{flex:1;font-style:italic;height:20px;margin-bottom:2px}input::placeholder{color:#555;opacity:1}
.up{border:4px solid transparent;border-top:0;border-bottom:4px solid #444;margin-right:3px}
.d{border:4px solid transparent;border-bottom:0;border-top:4px solid #444}`,
`<span class="h"><i class="g"></i><button aria-label="关闭">${ic('cmdx')}</button><button aria-label="自定义">${ic('wrench')}</button></span><button class="c" aria-label="最近命令">${ic('cmdbox')}<i class="d"></i></button><input placeholder="键入命令" aria-label="命令"><i class="up"></i>`);

define('cad-canvas',`
:host{display:block;position:relative;background:#000;overflow:hidden;min-width:0}
svg.d{position:absolute;inset:0;width:100%;height:100%}
.v{position:absolute;left:4px;top:6px;color:#eee}
cad-viewcube{position:absolute;right:17px;top:16px}
.wcs{position:absolute;right:59px;top:169px;width:48px;height:18px;background:#85858f;border-radius:4px;border:1px solid #6d6d75;color:#33343a;font:11px/14px "Liberation Sans",sans-serif;padding:0 4px;justify-content:space-between}
.wcs i{border:4px solid transparent;border-bottom:0;border-top:4px solid #aab4cc}
cad-navbar{position:absolute;right:4px;top:212px}
.ime{position:absolute;left:1249px;top:736px;width:60px;height:25px;background:#fff;border-radius:4px;color:#333;display:flex;align-items:center;justify-content:center;gap:4px;font-size:13px}
cad-command{position:absolute;left:20.4%;right:20.4%;bottom:0}`,
`<svg class="d" aria-hidden="true"><defs><linearGradient id="g" gradientUnits="userSpaceOnUse" x1="514" y1="0" x2="770" y2="0"><stop offset="0" stop-color="#c79ad0"/><stop offset=".22" stop-color="#d99ba0"/><stop offset=".35" stop-color="#dc9b98"/><stop offset=".65" stop-color="#e99a60"/><stop offset=".9" stop-color="#f6992a"/><stop offset="1" stop-color="#f79a22"/></linearGradient></defs>
<g transform="translate(-35,-202)" fill="none" stroke="#fff">
<circle cx="642" cy="586.500" r="127.500" fill="url(#g)"/>
<path d="M1209.500 404L1365.500 489.500 1369.500 668 1216.500 759 1061.500 673 1057.500 495z"/>
<path d="M676 212.500h97M724.500 202v59"/><path d="M722.500 210.500h4v4h-4z" fill="#000"/>
<path d="M54.500 937v49.500H105M51.500 982.500h8v8h-8z"/>
<g fill="#fff" stroke="none" font-family="Open Sans" font-weight="300" font-size="19"><text x="57" y="933">Y</text><text x="110" y="985">X</text></g></g></svg>
<span class="v">[−][俯视][二维线框]</span>
<cad-viewcube></cad-viewcube><button class="wcs"><span>WCS</span><i></i></button><cad-navbar></cad-navbar>
<div class="ime"><span>CH</span><svg width="10" height="12" fill="none" stroke="#333" aria-hidden="true"><path d="M4 1c6 1 7 9-3 9 5-2 5-6 3-9z"/></svg><span>简</span></div>
<cad-command></cad-command>`);

/* each group is a list of cells; a leading * marks a pressed cell, v is an arrow */
const ST=[['sgrid','*ssnap','v'],['sinf'],['*sdyn'],['sortho','spolar','v','siso','v'],['*strack'],['*sosnap','v'],['slw'],['*strans'],['scyc'],['s3d','v'],['*sducs'],['sfilt','v'],['*sgiz','v'],['*sann1','sann2','sann3','t1:1 / 100%','v'],['gear','v'],['splus'],['sruler','u小数','v'],['slist'],['slock','v'],['siso2'],['*sclean'],['sfull'],['sburger']];
define('cad-footer',`
:host{display:flex;height:31px;border-top:1px solid #3b4453;padding:0 5px 0 10px;justify-content:space-between;position:relative}
.l,.s,.g{display:flex}.s{gap:2px;padding-top:1px}
.l button{height:18px;color:#b9bdc4;background:#2d3541;padding:0 10px;margin-right:2px;border-radius:0 0 7px 7px}
.l .on{background:#3b4453;color:#fff;font-weight:bold;padding:0 12px;margin-left:4px}
.g{background:#3b4453;height:24px}
.g button{width:24px;height:24px;justify-content:center}.g .p{background:#5f90c5;width:22px}.g .v{width:16px}
.g .t{width:64px}.g .u{width:56px;justify-content:flex-start;padding-left:4px;font-weight:bold}
.o{width:180px;justify-content:flex-end;align-items:center;padding-right:5px;margin-right:2px;color:#c3c6cb}
.g .m{width:30px;font-weight:bold}.mg{margin-right:2px}
.wm{position:absolute;right:4px;top:-22px;display:flex;align-items:flex-start;pointer-events:none}
.wm div{display:flex;flex-direction:column;opacity:.75;align-items:flex-end}
.wm b{font:bold 21px/26px "Noto Sans CJK SC",sans-serif;color:#0d4d8c}
.wm em{font:normal 17px/18px "Liberation Sans",sans-serif;color:#1d7434}`,
`<div class="l"><button class="on">模型</button><button>布局1</button><button>布局2</button><button aria-label="新建布局">${ic('plus')}</button></div>
<div class="s"><span class="g o">1668.0539, 64.3494, 0.0000</span><span class="g mg"><button class="m">模型</button></span>
${ST.map(g=>`<span class="g">${g.map(c=>c==='v'?`<button class="v" aria-label="选项">${ic('down')}</button>`:c[0]==='t'||c[0]==='u'?`<button class="${c[0]}">${c.slice(1)}</button>`:c[0]==='*'?`<button class="p" aria-label="${c.slice(1)}">${ic(c.slice(1))}</button>`:`<button aria-label="${c}">${ic(c)}</button>`).join('')}</span>`).join('')}</div>
<div class="wm"><svg width="44" height="38" aria-hidden="true"><path d="M0 30C2 12 18 2 42 2 24 6 12 14 10 30 8 36 2 36 0 30z" fill="#0d5c96" opacity=".85"/><path d="M14 34c12 0 16-6 16-10-2-4-8-2-12 0 6-8 18-8 20-2 2 10-14 18-24 12z" fill="#2d8a3c" opacity=".85"/></svg><div><b>极光下载站</b><em>www.xz7.com</em></div></div>`);

define('cad-arrows',`
:host{position:absolute;left:-3px;top:-1px;width:480px;height:760px;z-index:30;pointer-events:none}
svg{filter:drop-shadow(2px 2px 2px #0009)}`,
()=>{const a=(x1,y1,x2,y2)=>{const t=Math.atan2(y2-y1,x2-x1)*180/Math.PI,l=Math.hypot(x2-x1,y2-y1);
return `<g transform="translate(${x1} ${y1}) rotate(${t})"><path d="M0-1H${l-20}L${l-26}-8L${l} 0L${l-26} 8L${l-20} 1H0z" fill="#f00" stroke="#b00000" stroke-width=".5"/></g>`};
return `<svg width="480" height="760" aria-hidden="true">${a(109,227,290,22)}${a(229,204,336,49)}${a(252,574,354,667)}<path d="M437.500 683.500v16l4-3.500 3 6 2.500-1-3-6h5z" fill="#fff" stroke="#222"/></svg>`});
</script>
</body>
</html>
